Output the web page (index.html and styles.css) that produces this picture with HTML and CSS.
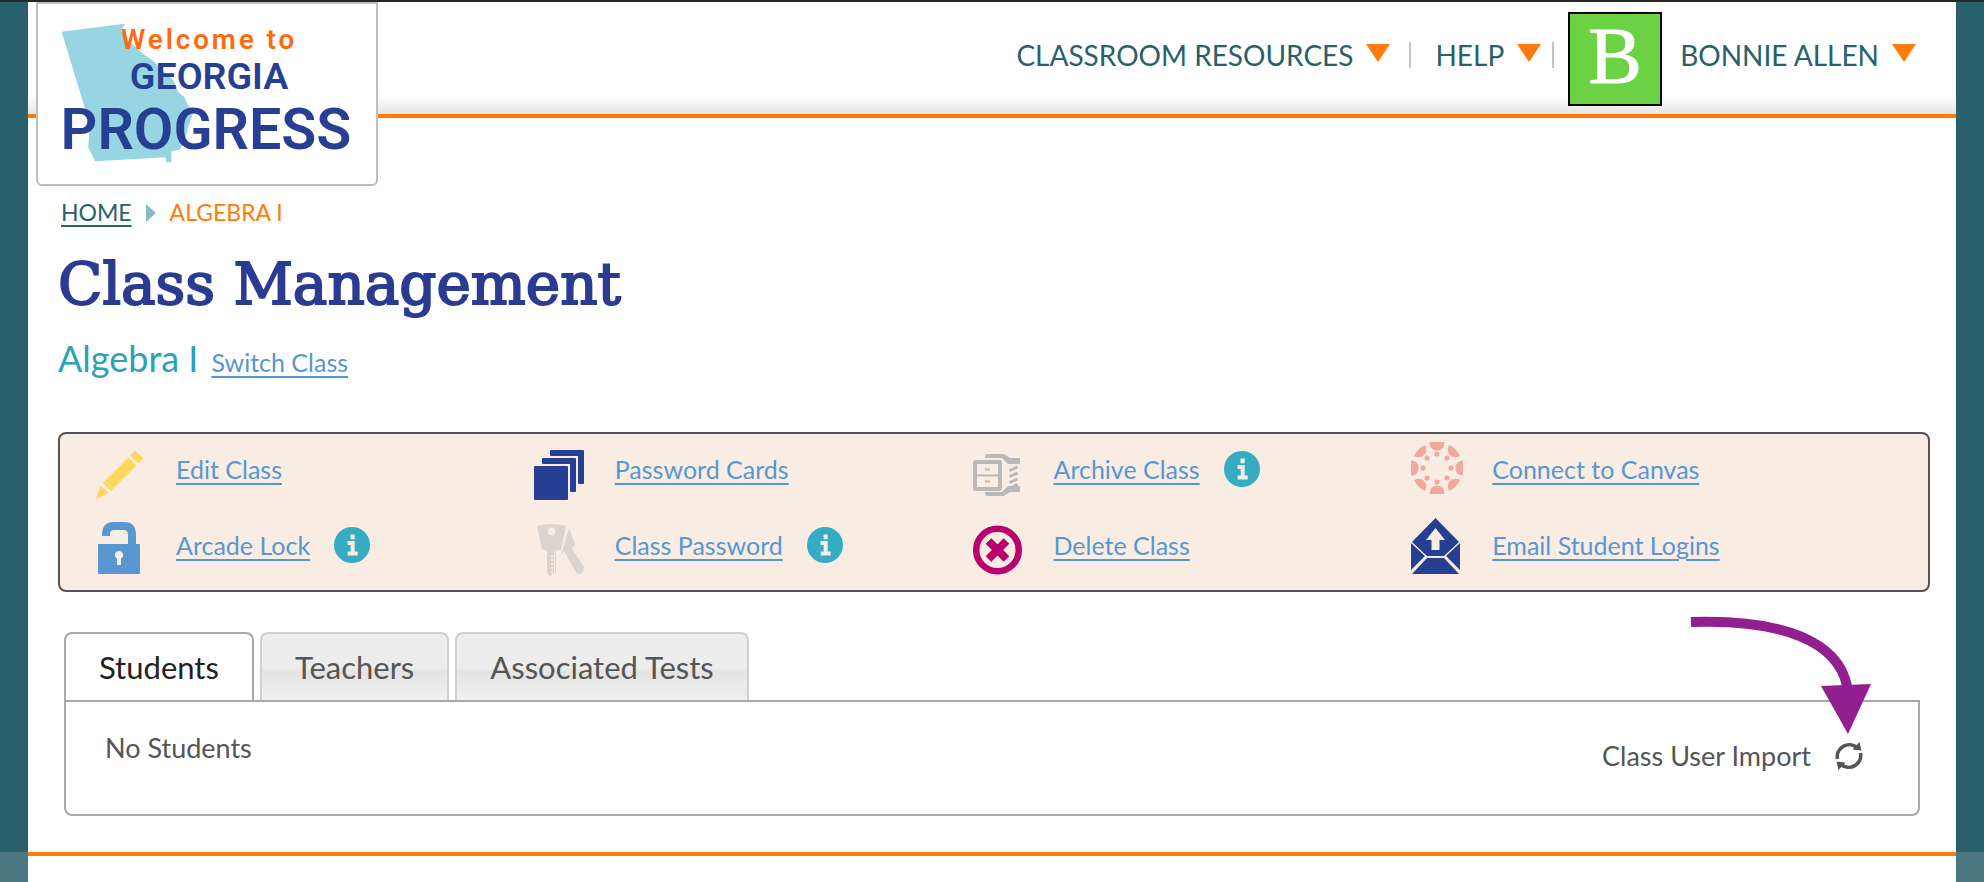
FILE: index.html
```
<!DOCTYPE html>
<html lang="en">
<head>
<meta charset="utf-8">
<title>Class Management</title>
<link rel="stylesheet" href="styles.css">
</head>
<body>
<svg class="symbols" aria-hidden="true">
  <symbol id="info" viewBox="0 0 36 36">
    <circle cx="18" cy="18" r="18" fill="#36acc3"/>
    <path fill="#f8ece3" d="M16.500 7.500h4.200v4.800h-4.200zM13.500 14h7.200v10.500h3v4h-10v-4h3v-6.500h-3.200z"/>
  </symbol>
</svg>
<div class="page">
  <header class="header">
    <a class="logo" href="#" aria-label="Georgia Progress home">
      <svg class="logo-art" viewBox="0 0 338 182">
        <path fill="#96d5e1" d="M22 28L86 20L82 27L88 36L104 50L115 58L128 71L135 77L140 89L146 94L150 103L156 108L150 124L147 136L142 147L133 149L133 160L128 160L127 155L56 159L49 145L50 128L47 110Z"/>
        <text class="logo-welcome" x="82" y="46">Welcome to</text>
        <text class="logo-georgia" x="91" y="86">GEORGIA</text>
        <text class="logo-progress" x="21" y="147">PROGRESS</text>
      </svg>
    </a>
    <nav class="nav">
      <button class="nav-item nav-resources">CLASSROOM RESOURCES<span class="caret"></span></button>
      <button class="nav-item nav-help">HELP<span class="caret"></span></button>
      <span class="avatar">B</span>
      <button class="nav-item nav-user">BONNIE ALLEN<span class="caret"></span></button>
    </nav>
  </header>

  <main class="main">
    <nav class="crumbs" aria-label="Breadcrumb">
      <a href="#">HOME</a><span class="crumb-arrow"></span><span class="crumb-current">ALGEBRA I</span>
    </nav>
    <h1 class="title">Class Management</h1>
    <div class="class-row"><h2 class="class-name">Algebra I</h2><a class="link" href="#">Switch Class</a></div>

    <section class="tools">
      <div class="tool">
        <svg class="icon" viewBox="0 0 52 58"><g fill="#ffd75f"><path d="M40 8.500L48.500 16.500L43.500 21.500L35 13.500Z"/><path d="M33.500 15.500L41.500 23.500L16 49L8 41Z"/><path d="M5.500 44L13.500 51L1 57Z"/></g></svg>
        <a class="link" href="#">Edit Class</a>
      </div>
      <div class="tool">
        <svg class="icon" viewBox="0 0 52 58"><g fill="#263f93"><path d="M17 8h32q1 0 1 1v32q0 1-1 1h-4q-1 0-1-1V14H17q-1 0-1-1V9q0-1 1-1z"/><path d="M9 16h32q1 0 1 1v32q0 1-1 1h-4q-1 0-1-1V22H9q-1 0-1-1v-4q0-1 1-1z"/><rect y="24" width="34" height="34" rx="1"/></g></svg>
        <a class="link" href="#">Password Cards</a>
      </div>
      <div class="tool">
        <svg class="icon" viewBox="0 0 52 58"><g transform="translate(0 2)"><rect x="2" y="18" width="25" height="27" rx="1" fill="none" stroke="#b9b9b9" stroke-width="4"/><path d="M2 31.500h25M12 25.500h5M12 37.500h5" stroke="#b9b9b9" stroke-width="2"/><path fill="#b9b9b9" d="M12 13q0-3 3-3h16l6 4h10v6H35l-6-6H12zM12 48q0 4 3 4h16l6-4h10v-6H35l-6 6z"/><path d="M36.500 26.500l8-3.500M36.500 32.500l8-3.500M36.500 38.500l8-3.500M38 43.500l6.500-3" stroke="#b9b9b9" stroke-width="3"/></g></svg>
        <a class="link" href="#">Archive Class</a>
        <svg class="info" role="img" aria-label="Info"><use href="#info"/></svg>
      </div>
      <div class="tool">
        <svg class="icon" viewBox="0 0 52 58"><g fill="#f2a89c"><path d="M18.500 0h15q0 8.500-7.500 8.500t-7.500-8.500zM18.500 52h15q0-8.500-7.500-8.500t-7.500 8.500zM0 18.500v15q7.500 0 7.500-7.500t-7.500-7.500zM52 18.500v15q-7.500 0-7.500-7.500t7.500-7.500zM3 14Q7 6 14 3q3 6-1 10t-10 1zM49 14Q45 6 38 3q-3 6 1 10t10 1zM3 38q4 8 11 11 3-6-1-10t-10-1zM49 38q-4 8-11 11-3-6 1-10t10-1z"/><circle cx="26" cy="12" r="2.600"/><circle cx="26" cy="40" r="2.600"/><circle cx="12" cy="26" r="2.600"/><circle cx="40" cy="26" r="2.600"/><circle cx="16" cy="16" r="2.600"/><circle cx="36" cy="16" r="2.600"/><circle cx="16" cy="36" r="2.600"/><circle cx="36" cy="36" r="2.600"/></g></svg>
        <a class="link" href="#">Connect to Canvas</a>
      </div>
      <div class="tool">
        <svg class="icon" viewBox="0 0 52 58"><path fill="#5897d2" d="M7 18V17Q7 4 19 4h10Q41 4 41 17v9h3q1 0 1 1v28q0 1-1 1H4q-1 0-1-1V27q0-1 1-1h29V17q0-5-4-5H19q-4 0-4 4v2z"/><path fill="#f8ece3" d="M24 33a4 4 0 0 1 2 7.500V47h-4v-6.500A4 4 0 0 1 24 33z"/></svg>
        <a class="link" href="#">Arcade Lock</a>
        <svg class="info" role="img" aria-label="Info"><use href="#info"/></svg>
      </div>
      <div class="tool">
        <svg class="icon" viewBox="0 0 52 58"><g fill="#dbd3cd"><path fill-rule="evenodd" d="M3 8Q17 4 32 8L27 31q0 1-2 1h-3v23h-3l-2 3h-1l-3-3V32h-3q-1 0-2-1zM17.500 9.500a4 4 0 1 0 .1 0z"/><path d="M35 10l6 16-3 5 12 18q0 4-3 7-4 0-5-2L30 33l-3 3 4-12z"/></g><path d="M20.500 33v22" stroke="#f8ece3" stroke-width="1"/><path d="M18 37v18" stroke="#f8ece3" stroke-width="2" stroke-dasharray="2 2"/></svg>
        <a class="link" href="#">Class Password</a>
        <svg class="info" role="img" aria-label="Info"><use href="#info"/></svg>
      </div>
      <div class="tool">
        <svg class="icon" viewBox="0 0 52 58"><circle cx="24.500" cy="32" r="21.300" fill="none" stroke="#b9006e" stroke-width="6.500"/><path d="M15.500 23l18 18M33.500 23l-18 18" stroke="#b9006e" stroke-width="8"/></svg>
        <a class="link" href="#">Delete Class</a>
      </div>
      <div class="tool">
        <svg class="icon" viewBox="0 0 52 58"><path fill="#263f93" d="M24.500 0L48 24L33 38H16L1 24zM0 25L14 38L0 52zM49 25V52L35 38zM16 40h17l15 16H1z"/><path fill="#f8ece3" d="M24.500 10L34 22h-5.500v10h-8V22H15z"/></svg>
        <a class="link" href="#">Email Student Logins</a>
      </div>
    </section>

    <section class="tabs">
      <div class="tab-list" role="tablist">
        <button class="tab tab-active" role="tab" aria-selected="true">Students</button>
        <button class="tab" role="tab" aria-selected="false">Teachers</button>
        <button class="tab" role="tab" aria-selected="false">Associated Tests</button>
      </div>
      <div class="tab-panel" role="tabpanel">
        <p class="empty">No Students</p>
        <button class="import">Class User Import
          <svg class="refresh" viewBox="0 0 28 28"><path d="M2.500 17A12 12 0 0 1 22 5.500M25.500 11A12 12 0 0 1 6 22.500" fill="none" stroke="#555" stroke-width="3.600"/><path fill="#555" d="M24.500 0L26.500 8.500L17.500 7.500zM3.500 28L1.500 19.500L10.500 20.500z"/></svg>
        </button>
        <svg class="pointer" viewBox="0 0 184 120" aria-hidden="true"><path d="M1 8C94 5 148 28 157 72" fill="none" stroke="#911f90" stroke-width="10"/><path fill="#911f90" d="M131 72L181 70L158 120z"/></svg>
      </div>
    </section>
  </main>
  <footer class="footer"></footer>
</div>
</body>
</html>
```
FILE: styles.css
```
* { box-sizing: border-box; }

body {
  margin: 0;
  background: #28606b;
  color: #555;
  font-family: "Lato", "Open Sans", sans-serif;
  font-size: 25px;
}

button {
  margin: 0;
  padding: 0;
  border: 0;
  background: none;
  color: inherit;
  font: inherit;
}

.symbols { position: absolute; width: 0; height: 0; }

.page {
  display: flex;
  flex-direction: column;
  min-height: 100vh;
  border-top: 2px solid #262626;
}

.header {
  display: flex;
  justify-content: space-between;
  align-items: flex-start;
  height: 116px;
  margin: 0 28px;
  padding: 0 40px 0 8px;
  border-bottom: 4px solid #ff7c0c;
  background: linear-gradient(#fff 92px, #e6e6e6 112px);
}

.logo {
  position: relative;
  width: 342px;
  height: 184px;
  flex: none;
  border: 2px solid #b9c0c4;
  border-radius: 0 0 6px 6px;
  background: #fff;
}

.logo-art { display: block; width: 100%; height: 100%; }

.logo-art text { font-family: "Roboto", sans-serif; font-weight: 600; fill: #263f93; }
.logo-art .logo-welcome { font-size: 28px; letter-spacing: 3px; fill: #ff690f; }
.logo-art .logo-georgia { font-size: 38px; }
.logo-art .logo-progress { font-size: 58px; }

.nav {
  display: flex;
  align-items: center;
  padding-top: 10px;
  color: #28606b;
  font-size: 28px;
}

.nav-item { display: flex; align-items: center; gap: 13px; height: 36px; line-height: 36px; margin-bottom: 8px; }
.nav-resources, .nav-help { background: linear-gradient(#c4c4c4, #c4c4c4) right 5px / 2px 26px no-repeat; }
.nav-resources { padding-right: 21px; margin-right: 24px; }
.nav-help { padding-right: 13px; margin-right: 14px; }

.caret {
  border: solid transparent;
  border-width: 18px 12px 0;
  border-top-color: #ff7c0c;
  margin-bottom: 4px;
}

.avatar {
  width: 94px;
  height: 94px;
  margin-right: 18px;
  border: 2px solid #000;
  background: #6bd145;
  color: #fff;
  font: 80px/84px "Liberation Serif", serif;
  text-align: center;
  -webkit-text-stroke: 1px #fff;
}

.main {
  flex: 1;
  margin: 0 28px;
  padding: 76px 26px 36px 30px;
  background: #fefefe;
}

.crumbs { display: flex; align-items: center; padding-left: 3px; font-size: 23px; line-height: 36px; }
.crumbs a { color: #28606b; text-underline-offset: 4px; text-decoration-thickness: 2px; }
.crumb-arrow { margin: 2px 14px 0; border: solid transparent; border-width: 9px 0 9px 10px; border-left-color: #88bac4; }
.crumb-current { color: #ff7c0c; }

.title {
  margin: 14px 0 0;
  color: #2c3b92;
  font: 58px/80px "DejaVu Serif", serif;
  -webkit-text-stroke: 2px #2c3b92;
}

.class-row { display: flex; align-items: baseline; gap: 13px; margin-top: 10px; line-height: 48px; }
.class-name { margin: 0; color: #2ea0b8; font-size: 36px; font-weight: 400; }

.link { color: #5897d2; text-underline-offset: 4px; text-decoration-thickness: 2px; }

.tools {
  display: grid;
  grid-template-columns: repeat(4, 1fr);
  row-gap: 18px;
  margin-top: 46px;
  padding: 8px 78px 14px 35px;
  border: 2px solid #555559;
  border-radius: 8px;
  background: #f8ece3;
}

.tool { display: flex; align-items: flex-start; }
.tool .link { line-height: 54px; }
.icon { flex: none; width: 52px; height: 58px; margin-right: 29px; }
.info { width: 36px; height: 36px; margin: 9px 0 0 24px; }

.tabs { margin: 40px 10px 0 6px; }
.tab-list { display: flex; gap: 6px; }

.tab {
  height: 68px;
  padding: 0 33px;
  border: 2px solid #d0d0d0;
  border-bottom: 0;
  border-radius: 8px 8px 0 0;
  background: linear-gradient(#ededed 50%, #e4e4e4 58%, #f0f0f0);
  font-size: 31px;
}

.tab-active { border-color: #a9a9a9; background: #fff; color: #222; }

.tab-panel {
  position: relative;
  display: flex;
  justify-content: space-between;
  align-items: flex-start;
  min-height: 116px;
  padding: 26px 55px 26px 39px;
  border: 2px solid #a9a9a9;
  border-radius: 0 0 8px 8px;
  background: #fff;
  font-size: 27px;
  line-height: 40px;
}

.empty { margin: 0; }
.import { display: flex; align-items: center; gap: 24px; padding-top: 8px; }
.refresh { width: 28px; height: 28px; }

.pointer { position: absolute; top: -88px; right: 44px; width: 184px; height: 120px; }

.footer {
  height: 30px;
  border: solid #4a7782;
  border-width: 0 28px;
  background: linear-gradient(#ff7c0c 4px, #fefefe 4px);
}
```
